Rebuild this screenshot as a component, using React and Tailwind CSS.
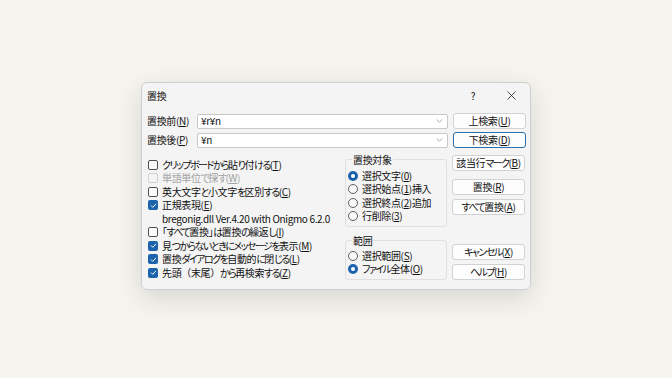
import React from 'react';
import clsx from 'clsx';

// Yu Gothic UI has narrow kana; tighten runs of kana to match
const J = ({ t }) =>
  t.split(/([\u3040-\u30ff]+|[（）])/).map((s, i) =>
    /[\u3040-\u30ff]/.test(s) ? (
      <span key={i} className="tracking-[-1.55px]">{s}</span>
    ) : /[（）]/.test(s) ? (
      <span key={i} className="[font-feature-settings:normal]">{s}</span>
    ) : (
      <React.Fragment key={i}>{s}</React.Fragment>
    )
  );

const K = ({ k }) => (
  <>
    (<span className="underline underline-offset-[1px]">{k}</span>)
  </>
);

const Check = ({ checked, disabled }) => (
  <span
    className={clsx(
      'w-[10px] h-[10px] rounded-[2px] shrink-0 flex items-center justify-center',
      checked
        ? 'bg-[#1d62ad]'
        : disabled
        ? 'border border-[#d0d0d0] bg-[#f5f5f5]'
        : 'border border-[#4f4f4f] bg-[#fbfbfb]'
    )}
  >
    {checked && (
      <svg viewBox="0 0 10 10" className="w-[9px] h-[9px]">
        <path d="M2.3 5.1 L4.2 7 L7.8 3.2" fill="none" stroke="#fff" strokeWidth="1.1" />
      </svg>
    )}
  </span>
);

const Radio = ({ checked }) => (
  <span
    className={clsx(
      'w-[10px] h-[10px] rounded-full shrink-0 flex items-center justify-center',
      checked ? 'bg-[#1d62ad]' : 'border border-[#5f5f5f] bg-[#f8f8f8]'
    )}
  >
    {checked && <span className="w-[4px] h-[4px] rounded-full bg-white" />}
  </span>
);

const Row = ({ icon, children, disabled }) => (
  <div className={clsx('h-[13.5px] flex items-center gap-[4px] whitespace-nowrap', disabled && 'text-[#a3a3a3]')}>
    {icon}
    <span>{children}</span>
  </div>
);

const Btn = ({ children, primary, className }) => (
  <div
    className={clsx(
      'h-[16px] w-[73px] rounded-[3px] bg-[#fdfdfd] flex items-center justify-center whitespace-nowrap border',
      primary ? 'border-[#2f6fa7]' : 'border-[#d2d2d2]',
      className
    )}
  >
    <span>{children}</span>
  </div>
);

const Combo = ({ value }) => (
  <div className="flex-1 h-[15px] border border-[#c8c8c8] bg-white rounded-[2px] flex items-center pl-[3px] pr-[4px]">
    <span className="flex-1">{value}</span>
    <svg viewBox="0 0 8 5" className="w-[7px] h-[4px]">
      <path d="M0.5 0.5 L4 4 L7.5 0.5" fill="none" stroke="#888" strokeWidth="0.9" />
    </svg>
  </div>
);

export default function App() {
  return (
    <div
      className="w-[672px] h-[378px] bg-[#f6f4ee] flex justify-center pt-[82px] text-[10px] tracking-[-0.35px] leading-none text-[#111]"
      style={{ fontFamily: '"Noto Sans CJK JP", "Noto Sans", sans-serif', fontFeatureSettings: '"palt"' }}
    >
      <div className="w-[390px] h-[208px] bg-[#f4f4f4] border border-[#cfcfcf] rounded-[6px] shadow-[0_8px_28px_rgba(0,0,0,0.13)] flex flex-col">
        {/* title bar */}
        <div className="h-[25px] flex items-center pl-[5px]">
          <span className="flex-1">置換</span>
          <div className="w-[38px] flex justify-center text-[10px]">?</div>
          <div className="w-[38px] flex justify-center">
            <svg viewBox="0 0 10 10" className="w-[9px] h-[9px]">
              <path d="M0.5 0.5 L9.5 9.5 M9.5 0.5 L0.5 9.5" stroke="#222" strokeWidth="0.9" />
            </svg>
          </div>
        </div>

        <div className="flex flex-col pl-[5px] pr-[4px] pt-[5px]">
          <div className="flex items-center gap-[5px]">
            <span className="w-[45px] whitespace-nowrap">置換前<K k="N" /></span>
            <Combo value="¥r¥n" />
            <Btn className="h-[15px]">上検索<K k="U" /></Btn>
          </div>
          <div className="flex items-center gap-[5px] mt-[3px]">
            <span className="w-[45px] whitespace-nowrap">置換後<K k="P" /></span>
            <Combo value="¥n" />
            <Btn primary>下検索<K k="D" /></Btn>
          </div>

          <div className="flex gap-[5px] mt-[5px]">
            {/* checkboxes */}
            <div className="w-[193px] flex flex-col pt-[5px] pl-[1px]">
              <Row icon={<Check />}><J t="クリップボードから貼り付ける" /><K k="T" /></Row>
              <Row icon={<Check disabled />} disabled><J t="単語単位で探す" /><K k="W" /></Row>
              <Row icon={<Check />}><J t="英大文字と小文字を区別する" /><K k="C" /></Row>
              <Row icon={<Check checked />}>正規表現<K k="E" /></Row>
              <Row><span className="pl-[14px]">bregonig.dll Ver.4.20 with Onigmo 6.2.0</span></Row>
              <Row icon={<Check />}><J t="「すべて置換」は置換の繰返し" /><K k="I" /></Row>
              <Row icon={<Check checked />}><J t="見つからないときにメッセージを表示" /><K k="M" /></Row>
              <Row icon={<Check checked />}><J t="置換ダイアログを自動的に閉じる" /><K k="L" /></Row>
              <Row icon={<Check checked />}><J t="先頭（末尾）から再検索する" /><K k="Z" /></Row>
            </div>

            {/* groups */}
            <div className="w-[102px] flex flex-col">
              <fieldset className="border border-[#e0e0e0] rounded-[3px] pl-[2px] pt-[3px] pb-[4px] h-[74px]">
                <legend className="ml-[4px] px-[1px] h-[13px] leading-[13px]">置換対象</legend>
                <Row icon={<Radio checked />}>選択文字<K k="0" /></Row>
                <Row icon={<Radio />}>選択始点<K k="1" />挿入</Row>
                <Row icon={<Radio />}>選択終点<K k="2" />追加</Row>
                <Row icon={<Radio />}>行削除<K k="3" /></Row>
              </fieldset>
              <fieldset className="border border-[#e0e0e0] rounded-[3px] pl-[2px] pt-[2px] pb-[3px] mt-[7px] h-[46px]">
                <legend className="ml-[4px] px-[1px] h-[13px] leading-[13px]">範囲</legend>
                <Row icon={<Radio />}>選択範囲<K k="S" /></Row>
                <Row icon={<Radio checked />}><J t="ファイル全体" /><K k="O" /></Row>
              </fieldset>
            </div>

            {/* buttons */}
            <div className="flex flex-col">
              <Btn className="mt-[2px]"><J t="該当行マーク" /><K k="B" /></Btn>
              <Btn className="mt-[8px]">置換<K k="R" /></Btn>
              <Btn className="mt-[4px]"><J t="すべて置換" /><K k="A" /></Btn>
              <Btn className="mt-[29px]"><J t="キャンセル" /><K k="X" /></Btn>
              <Btn className="mt-[4px]"><J t="ヘルプ" /><K k="H" /></Btn>
            </div>
          </div>
        </div>
      </div>
    </div>
  );
}
